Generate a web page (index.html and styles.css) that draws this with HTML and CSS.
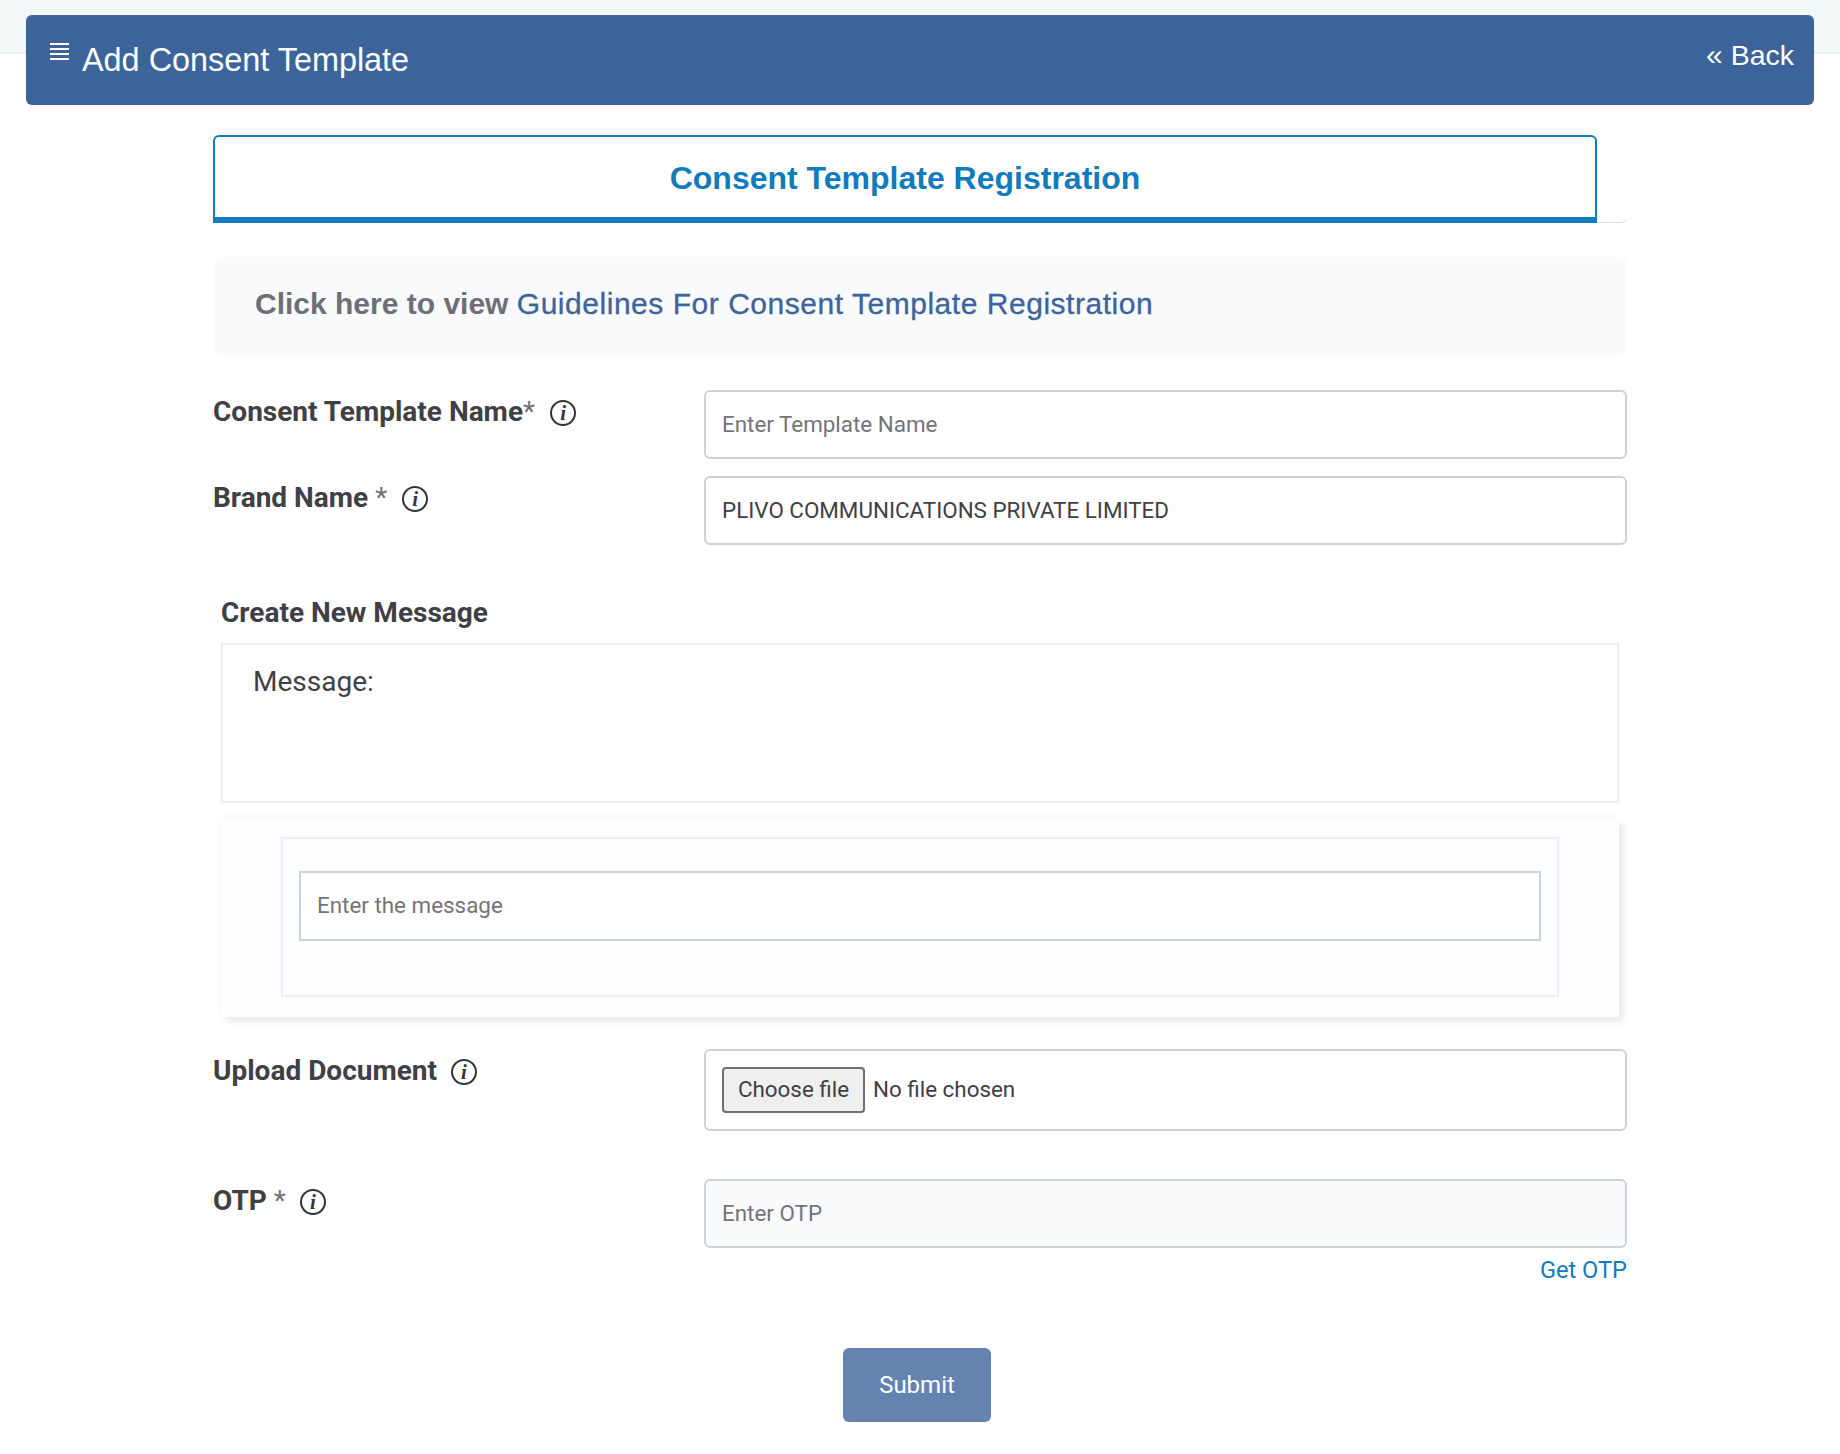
FILE: index.html
```html
<!DOCTYPE html>
<html lang="en">
<head>
<meta charset="utf-8">
<title>Add Consent Template</title>
<link rel="stylesheet" href="styles.css">
</head>
<body>
<div class="strip"></div>
<header class="bar">
  <div class="bar-title">
    <svg class="menu-icon" width="19" height="17" viewBox="0 0 19 17"><path d="M0 1h19M0 6h19M0 11h19M0 16h19" stroke="#fff" stroke-width="2" fill="none"/></svg>
    <h1>Add Consent Template</h1>
  </div>
  <a class="back"><span class="back-arrows">«</span> Back</a>
</header>
<main class="main">
  <div class="tabs"><div class="tab">Consent Template Registration</div></div>
  <div class="guide"><span class="guide-lead">Click here to view</span> <a class="guide-link">Guidelines For Consent Template Registration</a></div>

  <div class="row row-name">
    <label class="label">Consent Template Name<span class="star">*</span><span class="info">i</span></label>
    <input class="field" type="text" placeholder="Enter Template Name">
  </div>
  <div class="row row-brand">
    <label class="label">Brand Name <span class="star">*</span><span class="info">i</span></label>
    <input class="field" type="text" value="PLIVO COMMUNICATIONS PRIVATE LIMITED">
  </div>

  <section class="create">
    <h2 class="create-title">Create New Message</h2>
    <div class="message">Message:</div>
    <div class="panel">
      <div class="panel-inner">
        <input class="msg-input" type="text" placeholder="Enter the message">
      </div>
    </div>
  </section>

  <div class="row row-upload">
    <label class="label">Upload Document<span class="info info-near">i</span></label>
    <div class="file-box"><button class="file-btn" type="button">Choose file</button><span class="file-text">No file chosen</span></div>
  </div>
  <div class="row row-otp">
    <label class="label">OTP <span class="star">*</span><span class="info info-near">i</span></label>
    <div class="otp-col">
      <input class="field field-otp" type="text" placeholder="Enter OTP">
      <a class="get-otp">Get OTP</a>
    </div>
  </div>
  <div class="actions"><button class="submit" type="button">Submit</button></div>
</main>
</body>
</html>
```
FILE: styles.css
```css
* { box-sizing: border-box; }
html, body { margin: 0; padding: 0; background: #fff; }
body { font-family: Roboto, sans-serif; color: #3f4045; height: 1454px; overflow: hidden; }

.strip { height: 54px; background: #f2f7f8; border-bottom: 2px solid #eeeeee; }

.bar {
  margin: -39px 26px 0;
  height: 90px;
  background: #3c649b;
  border-radius: 6px;
  color: #fff;
  display: flex;
  justify-content: space-between;
  font-family: "Liberation Sans", Arial, sans-serif;
}
.bar-title { display: flex; align-items: flex-start; padding-left: 24px; }
.menu-icon { margin-top: 28px; }
.bar h1 { margin: 25px 0 0 13px; font-size: 32.4px; line-height: 40px; font-weight: 400; }
.back { margin: 20px 20px 0 0; font-size: 28.5px; line-height: 40px; }
.back-arrows { font-size: 30px; }

.main { margin: 30px 213px 0; width: 1414px; }

.tabs { border-bottom: 1px solid #dddddd; border-bottom-right-radius: 6px; height: 88px; }
.tab {
  width: 1384px;
  height: 88px;
  border: 2px solid #127bbd;
  border-bottom-width: 6px;
  border-radius: 6px 6px 0 0;
  color: #127bbd;
  font: 700 32px/82px "Liberation Sans", Arial, sans-serif;
  text-align: center;
}

.guide {
  margin: 34px 0 0 1px;
  height: 100px;
  padding: 27px 41px 0;
  background: #f8fafb;
  border-radius: 8px;
  font: 400 30px/40px "Liberation Sans", Arial, sans-serif;
}
.guide-lead { font-weight: 700; color: #6f6e77; }
.guide-link { color: #3c649b; letter-spacing: .53px; -webkit-text-stroke: .3px #3c649b; }

.row { display: grid; grid-template-columns: 491px 923px; }
.row-name { margin-top: 33px; }
.row-brand { margin-top: 17px; }
.row-upload { margin-top: 32px; }
.row-otp { margin-top: 48px; }

.label { font-size: 28px; line-height: 40px; font-weight: 700; color: #3f4045; padding-top: 2px; display: flex; align-items: center; height: 42px; white-space: pre; }
.star { color: #6f7177; font-weight: 400; }
.info {
  display: inline-flex;
  align-items: center;
  justify-content: center;
  width: 26px;
  height: 26px;
  margin: 2px 0 0 15px;
  border: 2px solid #33343a;
  border-radius: 50%;
  font: italic 700 21px/1 "Liberation Serif", serif;
  color: #33343a;
}
.info-near { margin-left: 14px; }

.field {
  display: block;
  width: 923px;
  height: 69px;
  padding: 0 16px 2px;
  border: 2px solid #ced2d9;
  border-radius: 6px;
  background: #fff;
  outline: none;
  font: 400 22.4px Roboto, sans-serif;
  color: #3f4045;
}
.field::placeholder, .msg-input::placeholder { color: #74737b; opacity: 1; }
.field-otp { background: #f9fafc; }

.create { margin: 48px 8px 0; }
.create-title { margin: 0; font-size: 28px; line-height: 40px; font-weight: 700; color: #3f4045; }
.message {
  margin-top: 10px;
  width: 1398px;
  height: 160px;
  padding: 17px 30px;
  border: 2px solid #eeeeee;
  font-size: 28px;
  line-height: 40px;
  color: #3f4045;
}
.panel {
  margin-top: 16px;
  width: 1398px;
  height: 198px;
  padding: 18px 60px 20px;
  background: #fcfdfe;
  box-shadow: 0 0 10px rgba(0, 0, 0, .06), 6px 6px 6px rgba(0, 0, 0, .06);
}
.panel-inner { height: 160px; padding: 32px 16px; border: 2px solid #eeeff2; }
.msg-input {
  display: block;
  width: 100%;
  height: 70px;
  padding: 0 16px 2px;
  border: 2px solid #ced2d9;
  background: #fff;
  outline: none;
  font: 400 22.4px Roboto, sans-serif;
}

.file-box {
  height: 82px;
  padding: 16px;
  border: 2px solid #ced2d9;
  border-radius: 6px;
  display: flex;
  align-items: center;
  font-size: 22.4px;
  color: #3f4045;
}
.file-btn {
  width: 143px;
  height: 46px;
  padding: 0 0 2px;
  border: 2px solid #6f7177;
  border-radius: 4px;
  background: #efefef;
  font: 400 22.4px Roboto, sans-serif;
  color: #3f4045;
}
.file-text { margin: 0 0 2px 8px; }

.otp-col { display: flex; flex-direction: column; align-items: flex-end; }
.get-otp { margin-top: 6px; font-size: 23.6px; line-height: 32px; color: #127bbd; }

.actions { display: flex; justify-content: center; margin: 62px 0 0 -3px; width: 1414px; }
.submit {
  width: 148px;
  height: 74px;
  padding: 0;
  border: 0;
  border-radius: 6px;
  background: #6583b1;
  color: #fff;
  font: 400 24px Roboto, sans-serif;
}
```
